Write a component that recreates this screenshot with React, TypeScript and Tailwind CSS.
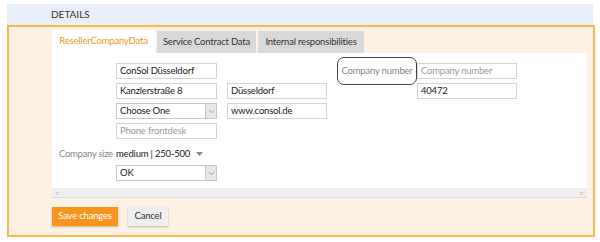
import { ChevronDown } from 'lucide-react'

const font = { fontFamily: 'Lato, "Open Sans", sans-serif' }

function Input({ value, placeholder, w = 'w-[101px]' }: { value?: string; placeholder?: string; w?: string }) {
  return (
    <div className={`${w} h-[16px] border border-[#d4d4d4] bg-white px-[3px] flex items-center text-[9.5px] tracking-[-0.2px] leading-none`}>
      {value ? <span className="text-[#222]">{value}</span> : <span className="text-[#9a9a9a]">{placeholder}</span>}
    </div>
  )
}

function Select({ value }: { value: string }) {
  return (
    <div className="w-[101px] h-[16px] border border-[#c8c8c8] bg-white flex items-stretch text-[9.5px] tracking-[-0.2px] leading-none">
      <span className="flex-1 flex items-center px-[3px] text-[#222]">{value}</span>
      <span className="w-[11px] bg-[#e6e6e6] border-l border-[#c8c8c8] flex items-center justify-center">
        <ChevronDown size={9} strokeWidth={1.5} className="text-[#666]" />
      </span>
    </div>
  )
}

export default function App() {
  return (
    <div className="w-[600px] h-[242px] bg-white pt-[4px] px-[7px]" style={font}>
      <div className="h-[21px] bg-[#e9eff8] flex items-center pl-[44px] text-[10px] text-[#333]">DETAILS</div>

      <div className="border-2 border-[#fbb84d] bg-[#fef1e3] h-[212px] w-[588px] pl-[43px] pr-[5px] pt-[3px]">
        {/* tabs */}
        <div className="flex items-end gap-[2px] h-[23px] text-[9.5px] tracking-[-0.2px]">
          <div className="h-[23px] w-[103px] bg-white flex items-center justify-center text-[#f7941d]">ResellerCompanyData</div>
          <div className="h-[22px] w-[99px] bg-[#d9d9d9] flex items-center justify-center text-[#333]">Service Contract Data</div>
          <div className="h-[22px] w-[106px] bg-[#d9d9d9] flex items-center justify-center text-[#333]">Internal responsibilities</div>
        </div>

        {/* content */}
        <div className="bg-white w-[535px]">
          <div className="pt-[10px] pb-[7px] flex flex-col gap-[4px]">
            <div className="flex items-center">
              <div className="w-[64px]" />
              <Input value="ConSol Düsseldorf" />
              <div className="w-[120px]" />
              <div className="-my-[6px] h-[28px] w-[80px] border border-[#444] rounded-[7px] flex items-center justify-center text-[9.5px] tracking-[-0.2px] text-[#888]">
                Company number
              </div>
              <Input placeholder="Company number" w="w-[100px]" />
            </div>
            <div className="flex items-center">
              <div className="w-[64px]" />
              <Input value="Kanzlerstraße 8" />
              <div className="w-[10px]" />
              <Input value="Düsseldorf" w="w-[100px]" />
              <div className="w-[90px]" />
              <Input value="40472" w="w-[100px]" />
            </div>
            <div className="flex items-center">
              <div className="w-[64px]" />
              <Select value="Choose One" />
              <div className="w-[10px]" />
              <Input value="www.consol.de" w="w-[100px]" />
            </div>
            <div className="flex items-center">
              <div className="w-[64px]" />
              <Input placeholder="Phone frontdesk" />
            </div>
            <div className="flex items-center h-[14px] mt-[4px]">
              <div className="w-[64px] pl-[7px] text-[9.5px] tracking-[-0.3px] text-[#888] whitespace-nowrap">Company size</div>
              <span className="text-[9.5px] tracking-[-0.2px] text-[#222]">medium | 250-500</span>
              <svg width="7" height="4" viewBox="0 0 7 4" className="ml-[6px]">
                <path d="M0 0h7L3.5 4z" fill="#888" />
              </svg>
            </div>
            <div className="flex items-center">
              <div className="w-[64px]" />
              <Select value="OK" />
            </div>
          </div>
          <div className="h-[10px] bg-[#eeeeee] border-b border-[#dcdcdc] flex items-center justify-between px-[3px] text-[8px] text-[#aaa] leading-none">
            <span>&lt;</span>
            <span>&gt;</span>
          </div>
        </div>

        {/* buttons */}
        <div className="flex items-center gap-[10px] mt-[9px]">
          <button className="h-[19px] w-[66px] bg-[#f7941d] text-white text-[9.5px] tracking-[-0.2px] shadow-[0_1px_2px_rgba(0,0,0,0.25)]">Save changes</button>
          <button className="h-[19px] w-[40px] bg-[#eeeeee] text-[#333] text-[9.5px] tracking-[-0.2px] shadow-[0_1px_2px_rgba(0,0,0,0.25)]">Cancel</button>
        </div>
      </div>
    </div>
  )
}
